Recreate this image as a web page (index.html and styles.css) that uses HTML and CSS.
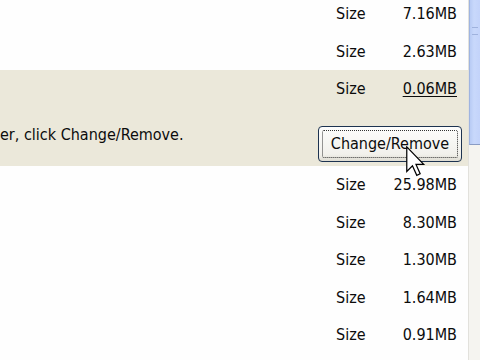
FILE: index.html
```html
<!DOCTYPE html>
<html>
<head>
<meta charset="utf-8">
<link rel="stylesheet" href="styles.css">
</head>
<body>
<div class="window">
  <div class="list">
    <div class="row"><span class="label">Size</span><span class="value">7.16MB</span></div>
    <div class="row"><span class="label">Size</span><span class="value">2.63MB</span></div>
    <div class="selected">
      <div class="row"><span class="label">Size</span><span class="value link">0.06MB</span></div>
      <div class="detail">
        <span class="desc">er, click Change/Remove.</span>
        <button class="btn"><span class="focus">Change/Remove</span></button>
      </div>
    </div>
    <div class="row"><span class="label">Size</span><span class="value">25.98MB</span></div>
    <div class="row"><span class="label">Size</span><span class="value">8.30MB</span></div>
    <div class="row"><span class="label">Size</span><span class="value">1.30MB</span></div>
    <div class="row"><span class="label">Size</span><span class="value">1.64MB</span></div>
    <div class="row"><span class="label">Size</span><span class="value">0.91MB</span></div>
  </div>
  <div class="scrollbar">
    <div class="thumb"><span class="grip"></span></div>
    <div class="track"></div>
  </div>
  <svg class="cursor" width="20" height="31" viewBox="0 0 13 20">
    <path d="M0.5 0.5 L0.5 16.5 L4.2 12.8 L7 19 L9.2 18 L6.5 11.9 L11.5 11.9 Z" fill="#fff" stroke="#000" stroke-width="0.8" stroke-linejoin="miter"/>
  </svg>
</div>
</body>
</html>
```

FILE: styles.css
```css
html, body {
  margin: 0;
  padding: 0;
  width: 480px;
  height: 360px;
  overflow: hidden;
  background: #ffffff;
}

.window {
  position: relative;
  display: flex;
  width: 480px;
  height: 360px;
  overflow: hidden;
  font-family: "DejaVu Sans Condensed", "DejaVu Sans", sans-serif;
  font-size: 16px;
  color: #0c0c0c;
}

.list {
  flex: 1;
  display: flex;
  flex-direction: column;
  margin-top: -5px;
  background: #fefefe;
}

.row {
  height: 37.5px;
  flex: none;
  display: flex;
  align-items: center;
  justify-content: flex-end;
  padding-right: 11px;
}

.label {
  width: 33px;
}

.value {
  width: 88px;
  text-align: right;
}

.link {
  text-decoration: underline;
  text-underline-offset: 2px;
}

.selected {
  background: #ebe8da;
  display: flex;
  flex-direction: column;
}

.detail {
  height: 58.5px;
  display: flex;
  align-items: flex-start;
  justify-content: space-between;
  padding-right: 6px;
}

.desc {
  margin-top: 17px;
  line-height: 20px;
}

.btn {
  margin-top: 18px;
  width: 144px;
  height: 36px;
  padding: 3px;
  border: 1px solid #1d3350;
  border-radius: 4px;
  background: linear-gradient(#fdfdfc, #f2f1ec 80%, #dedcd2);
  font: inherit;
  color: #0c0c0c;
  display: flex;
}

.focus {
  flex: 1;
  display: flex;
  align-items: center;
  justify-content: center;
  border: 1px dotted #333;
  border-radius: 2px;
}

.scrollbar {
  width: 11px;
  display: flex;
  flex-direction: column;
  border-left: 1px solid #e2e1dc;
}

.thumb {
  height: 145px;
  background: linear-gradient(90deg, #b8cbf4, #c8d8fb 40%, #c3d3fa);
  border-left: 1px solid #9fb4e0;
  border-bottom: 1px solid #8a9cc4;
  box-sizing: border-box;
  display: flex;
  justify-content: center;
}

.grip {
  margin-top: 27px;
  width: 6px;
  height: 6px;
  border-top: 1px solid #9fb2dd;
  border-bottom: 1px solid #9fb2dd;
}

.track {
  flex: 1;
  background: #f5f4f0;
}

.cursor {
  position: absolute;
  left: 406px;
  top: 146px;
}
```
